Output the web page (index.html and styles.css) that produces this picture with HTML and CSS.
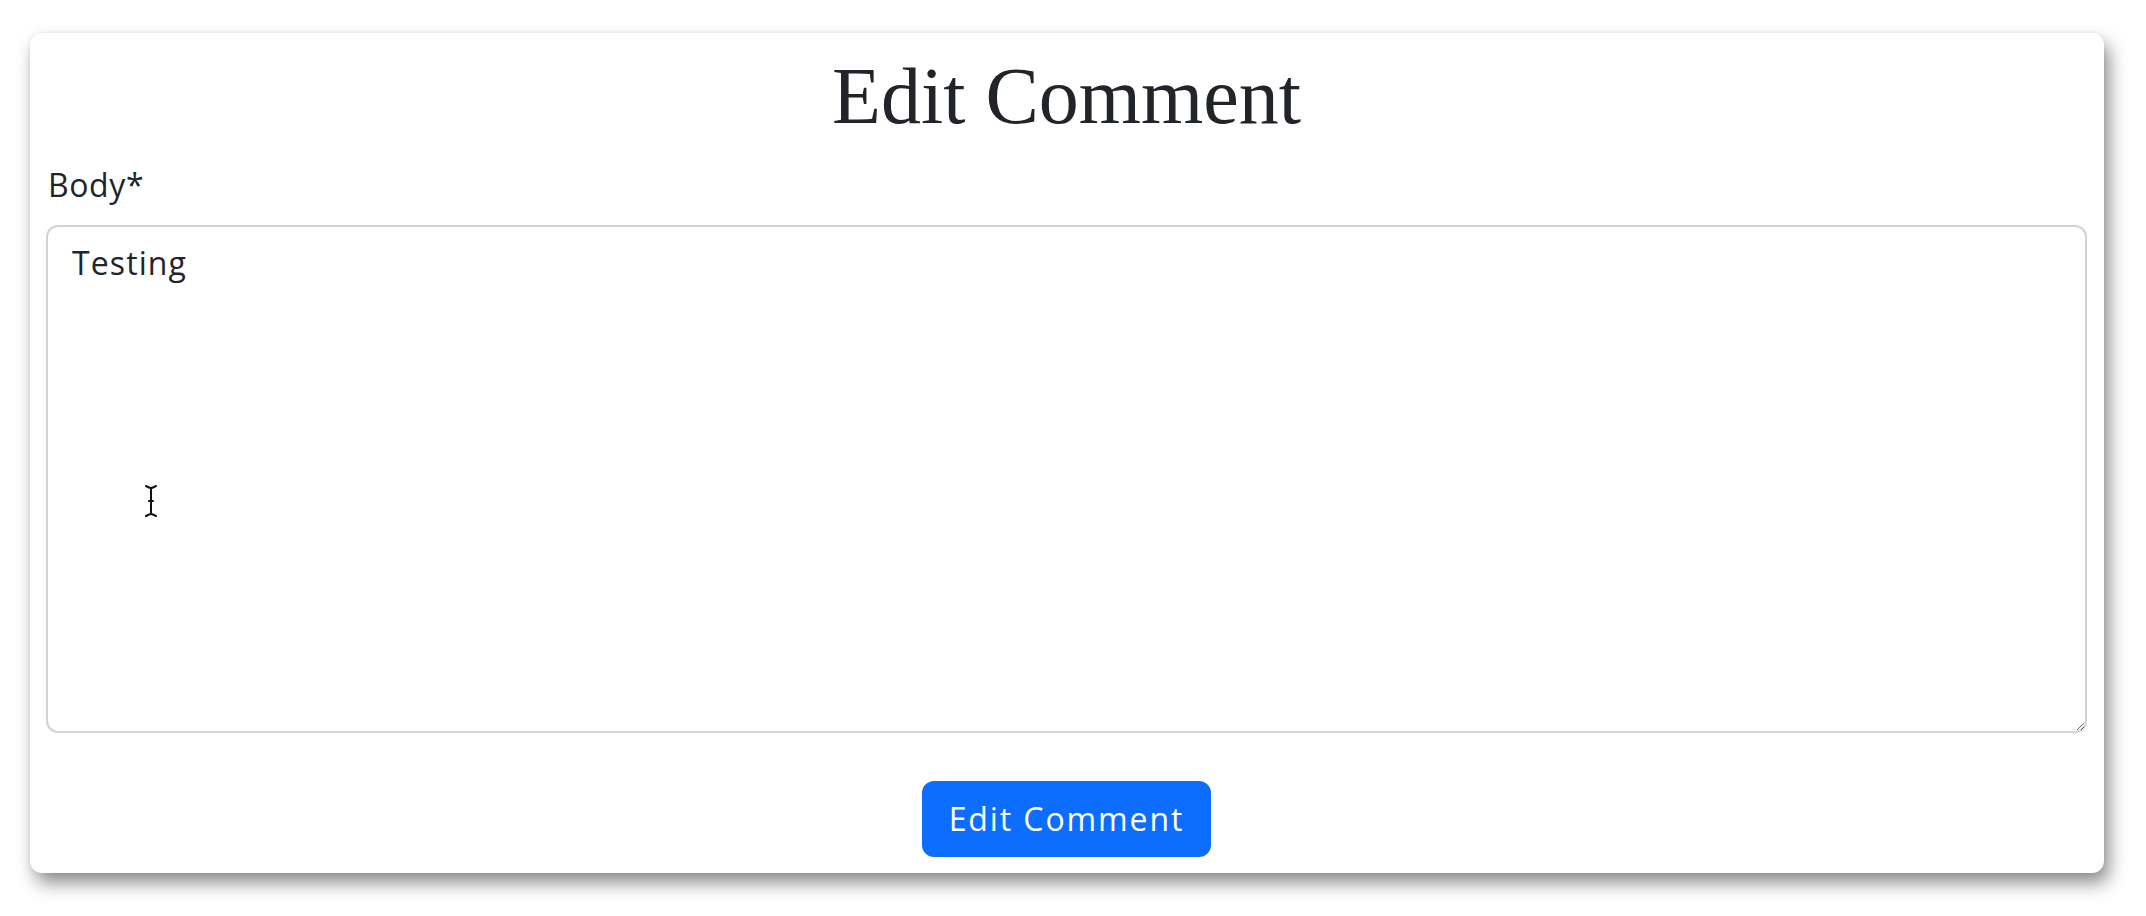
FILE: index.html
```html
<!DOCTYPE html>
<html lang="en">
<head>
<meta charset="utf-8">
<title>Edit Comment</title>
<link rel="stylesheet" href="styles.css">
</head>
<body>
<main class="card">
  <h1 class="title">Edit Comment</h1>
  <form class="form">
    <label class="label" for="body">Body*</label>
    <textarea id="body" class="textarea">Testing</textarea>
    <div class="actions">
      <button type="button" class="btn">Edit Comment</button>
    </div>
  </form>
  <svg class="cursor" width="16" height="34" viewBox="0 0 16 34" aria-hidden="true">
    <path d="M3 2 L6 3.5 Q8 4.5 10 3.5 L13 2 M8 4 V30 M3 32 L6 30.5 Q8 29.5 10 30.5 L13 32 M6 17 H10" fill="none" stroke="#111" stroke-width="2" stroke-linecap="round"/>
  </svg>
</main>
</body>
</html>
```
FILE: styles.css
```css
* { box-sizing: border-box; }

html, body {
  margin: 0;
  padding: 0;
  background: #ffffff;
}

body {
  padding: 33px 42px 40px 30px;
  font-family: "Open Sans", "Noto Sans", sans-serif;
  color: #212529;
}

.card {
  position: relative;
  background: #ffffff;
  border-radius: 12px;
  box-shadow: 5px 10px 18px rgba(0, 0, 0, 0.45), 0 0 4px rgba(0, 0, 0, 0.06);
  padding: 15px 17px 17px 16px;
  height: 840px;
}

.title {
  margin: 0 0 17px;
  font-family: "Liberation Serif", "Times New Roman", serif;
  font-weight: 400;
  font-size: 80px;
  line-height: 96px;
  text-align: center;
  color: #212529;
}

.form {
  display: flex;
  flex-direction: column;
}

.label {
  display: block;
  font-size: 32px;
  line-height: 48px;
  letter-spacing: 0.6px;
  margin: 0 0 16px 2px;
  color: #212529;
}

.textarea {
  display: block;
  width: 100%;
  height: 508px;
  padding: 12px 24px;
  border: 2px solid #ced4da;
  border-radius: 12px;
  font-family: "Open Sans", "Noto Sans", sans-serif;
  font-size: 32px;
  line-height: 48px;
  letter-spacing: 1.1px;
  color: #212529;
  background: #fff;
  resize: vertical;
  outline: none;
}

.actions {
  display: flex;
  justify-content: center;
  margin-top: 48px;
}

.btn {
  font-family: "Open Sans", "Noto Sans", sans-serif;
  font-size: 32px;
  line-height: 48px;
  letter-spacing: 1.9px;
  padding: 12px 25px;
  border: 2px solid #0d6efd;
  border-radius: 12px;
  background: #0d6efd;
  color: #ffffff;
  cursor: pointer;
}

.cursor {
  position: absolute;
  left: 113px;
  top: 451px;
}
```
